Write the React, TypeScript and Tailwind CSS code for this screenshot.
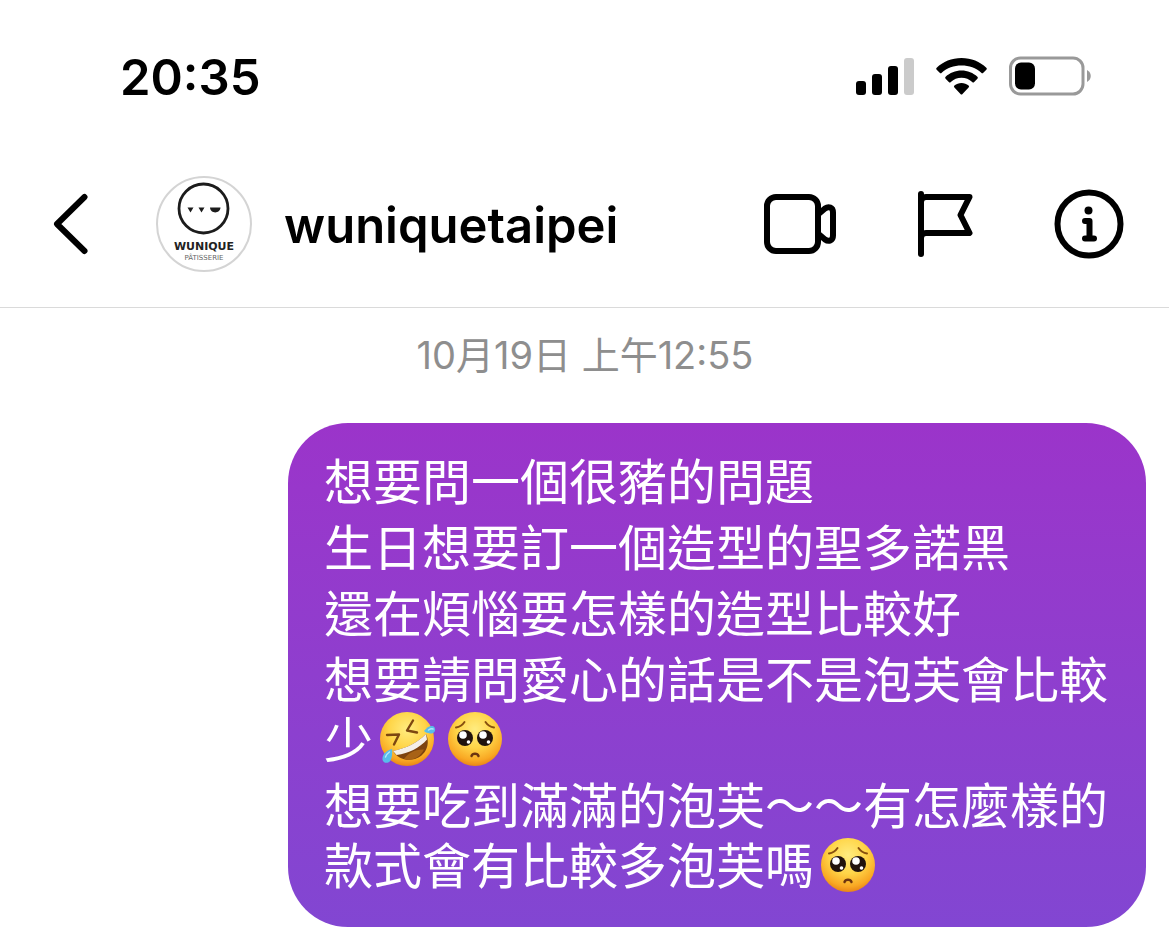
import { useId } from 'react';

const messages: string[] = [
    '想要問一個很豬的問題',
    '生日想要訂一個造型的聖多諾黑',
    '還在煩惱要怎樣的造型比較好',
    '想要請問愛心的話是不是泡芙會比較少🤣🥺',
    '想要吃到滿滿的泡芙～～有怎麼樣的款式會有比較多泡芙嗎🥺',
]

const SignalIcon = () => (
    <svg width="58" height="38" viewBox="0 0 58 38" aria-hidden="true">
        <rect x="0" y="24" width="10" height="14" rx="3" />
        <rect x="16" y="17" width="10" height="21" rx="3" />
        <rect x="32" y="9" width="10" height="29" rx="3" />
        <rect x="48" y="1" width="10" height="37" rx="3" fill="#cbcbcb" />
    </svg>
)

const WifiIcon = () => (
    <svg width="51" height="38" viewBox="0 0 51 38" aria-hidden="true">
        <path d="M25.500 1C35.300 1 44 4.700 50.300 10.700q1 1 0 2L47.300 15.800q-1 1-2 0C40 10.900 33.100 8.500 25.500 8.500S11 10.900 5.700 15.800q-1 1-2 0L.7 12.700q-1-1 0-2C7 4.700 15.700 1 25.500 1Z" />
        <path d="M25.500 13.500c6.100 0 11.700 2.400 15.900 6.200q1 1 0 2l-3.200 3.200q-1 1-2 0c-2.900-2.600-6.600-4.200-10.700-4.200s-7.800 1.600-10.700 4.200q-1 1-2 0l-3.200-3.200q-1-1 0-2c4.200-3.800 9.800-6.200 15.900-6.200Z" />
        <path d="M25.500 26c2.700 0 5.100 1 7.100 2.600q1 1 0 2l-6.100 6.300q-1 1-2 0l-6.100-6.300q-1-1 0-2c2-1.600 4.400-2.600 7.100-2.600Z" />
    </svg>
)

const BatteryIcon = () => (
    <svg width="82" height="40" viewBox="0 0 82 40" aria-hidden="true">
        <rect x="1.500" y="2" width="72.500" height="36" rx="10" fill="none" stroke="#999" strokeWidth="3" />
        <rect x="6" y="6.500" width="20" height="27" rx="6" />
        <path d="M78 14c5 2.500 5 9.500 0 12Z" fill="#999" />
    </svg>
)

const BackIcon = () => (
    <svg width="36" height="64" viewBox="0 0 36 64" fill="none" stroke="currentColor" strokeWidth="6" strokeLinecap="round" strokeLinejoin="round" aria-hidden="true">
        <path d="M32.500 5 5 32l27.500 27" />
    </svg>
)

const VideoIcon = () => (
    <svg width="72" height="60" viewBox="0 0 72 60" fill="none" stroke="currentColor" strokeWidth="6" strokeLinejoin="round" aria-hidden="true">
        <rect x="3" y="3" width="51" height="54" rx="9" />
        <path d="m54.500 20 6.500-5.500c3.500-2.500 8-1.500 8 4v23c0 5.500-4.500 6.500-8 4L54.500 40" />
    </svg>
)

const FlagIcon = () => (
    <svg width="56" height="66" viewBox="0 0 56 66" fill="none" stroke="currentColor" strokeWidth="6" strokeLinecap="round" strokeLinejoin="round" aria-hidden="true">
        <path d="M4 3v60M4 11q0-5 5-5h43.500L43.500 24l9 18H9q-5 0-5 5" />
    </svg>
)

const InfoIcon = () => (
    <svg width="70" height="70" viewBox="0 0 70 70" fill="none" stroke="currentColor" strokeWidth="6" strokeLinecap="round" strokeLinejoin="round" aria-hidden="true">
        <circle cx="35" cy="35" r="31.500" />
        <circle cx="34.500" cy="21.500" r="4" fill="currentColor" stroke="none" />
        <path d="M31 32h4.500v17M31 49.500h9" />
    </svg>
)

const Logo = () => (
    <svg width="96" height="96" viewBox="0 0 96 96" role="img" aria-label="WUNIQUE PÂTISSERIE">
        <circle cx="48" cy="48" r="47" fill="#fff" stroke="#d4d4d4" strokeWidth="2" />
        <circle cx="47.500" cy="32.500" r="24.500" fill="none" stroke="#1c1c1c" strokeWidth="2.800" />
        <path d="M31.500 31.500h6L34.500 36.500ZM42.500 31.500h6L45.500 36.500ZM54 31.500h10.500c-.5 6.500-10 6.500-10.500 0Z" fill="#1c1c1c" />
        <text x="48" y="74" textAnchor="middle" fill="#222" className="font-['DejaVu_Sans'] text-[11px] font-bold">WUNIQUE</text>
        <text x="48" y="84" textAnchor="middle" fill="#666" className="font-['DejaVu_Sans'] text-[7px]">PÂTISSERIE</text>
    </svg>
)

const FaceFill = ({ id }: { id: string }) => (
    <>
        <defs>
            <radialGradient id={id} cx="50%" cy="32%" r="68%">
                <stop offset="0" stopColor="#ffec80" />
                <stop offset=".5" stopColor="#ffd548" />
                <stop offset=".85" stopColor="#f9a823" />
                <stop offset="1" stopColor="#e98518" />
            </radialGradient>
        </defs>
        <circle cx="34" cy="30" r="27" fill={`url(#${id})`} />
    </>
)

const LaughingFace = () => {
    const id = useId()
    return (
        <svg width="68" height="60" viewBox="0 -2 68 60" className="inline-block align-top" role="img" aria-label="🤣">
            <FaceFill id={id} />
            <path d="M20 42C34 39 44 34 53 25c5 11-1 22-11 25-9 2.500-18-1-22-8Z" fill="#7d430f" />
            <path d="M31 50c4-6 11-10 20-9.500-4 8-12 12-20 9.500Z" fill="#a86216" />
            <path d="M20 42C34 39 44 34 53 25l1 5.500C47 38.500 36 44.500 23.500 46Z" fill="#f4efe8" />
            <path d="m14 26 12-.5-5 10M40 11.500 34 21.500l10 2" fill="none" stroke="#7d4711" strokeWidth="2.400" strokeLinecap="round" strokeLinejoin="round" />
            <path d="M19 40c-6.500 2-10 6-9.500 10.500.5 4 6 4.500 8 1 1.500-3 2-7 1.500-11.500Z" fill="#58bdeb" />
            <path d="M51 22c3.500-4.500 8.500-6.500 10.500-3.500 2 3.500-1 6.500-4.500 6-2.500-.5-4.500-1-6-2.500Z" fill="#58bdeb" />
            <path d="M12.500 48c1-2.500 2.500-4 4-5M55.500 21c1.500-1 3-1.500 4.500-1" fill="none" stroke="#b6e7fa" strokeWidth="1.500" strokeLinecap="round" />
        </svg>
    )
}

const PleadingFace = () => {
    const id = useId()
    return (
        <svg width="68" height="60" viewBox="0 -2 68 60" className="inline-block align-top" role="img" aria-label="🥺">
            <FaceFill id={id} />
            <path d="M15 18.500c4-.5 6.500-2.500 8.500-5.500M44.500 13c2 3 4.500 5 8.500 5.500" fill="none" stroke="#87500f" strokeWidth="2" strokeLinecap="round" />
            <circle cx="24" cy="29" r="8" fill="#21130d" />
            <circle cx="44" cy="29" r="8" fill="#21130d" />
            <circle cx="22" cy="26" r="3.800" fill="#fff" />
            <circle cx="42" cy="26" r="3.800" fill="#fff" />
            <circle cx="27.500" cy="33" r="1.800" fill="#fff" />
            <circle cx="47.500" cy="33" r="1.800" fill="#fff" />
            <path d="M30.500 47c1-3 6-3 7 0" fill="none" stroke="#6c3410" strokeWidth="2.400" strokeLinecap="round" />
        </svg>
    )
}

// swaps the emoji characters for the drawn faces
const MessageLine = ({ text }: { text: string }) => (
    <p>
        {text.split(/(🤣|🥺)/u).map((part, i) => {
            if (part === '🤣') return <LaughingFace key={i} />
            if (part === '🥺') return <PleadingFace key={i} />
            return part
        })}
    </p>
)

const App = () => {
    return (
        <div className="min-h-screen bg-white text-black font-['Inter','Noto_Sans_CJK_TC',sans-serif]">
            <div className="flex h-35 items-center justify-between pt-3 pr-[78px] pl-30">
                <time className="pt-0.5 text-[49px] leading-none font-semibold">20:35</time>
                <div className="flex items-center gap-[22px]">
                    <SignalIcon />
                    <WifiIcon />
                    <BatteryIcon />
                </div>
            </div>

            <header className="flex h-42 items-center justify-between border-b border-[#dadada] pr-[45px] pl-[52px]">
                <div className="flex items-center">
                    <button type="button" aria-label="Back" className="mr-[68px]">
                        <BackIcon />
                    </button>
                    <a href="#profile" className="flex items-center gap-8">
                        <Logo />
                        <h1 className="pt-1 text-[49px] leading-none font-semibold">wuniquetaipei</h1>
                    </a>
                </div>
                <div className="flex items-center gap-[81px]">
                    <button type="button" aria-label="Video call"><VideoIcon /></button>
                    <button type="button" aria-label="Flag"><FlagIcon /></button>
                    <button type="button" aria-label="Info"><InfoIcon /></button>
                </div>
            </header>

            <main className="pr-[23px] pb-4 pl-6">
                <p className="pt-[23px] pb-11 text-center text-[38px] leading-[48px] text-[#8e8e8e]">10月19日 上午12:55</p>
                <div className="ml-auto flex w-[858px] max-w-full flex-col gap-1.5 rounded-[60px] bg-linear-to-b from-[#9b34ca] to-[#8246d2] px-9 pt-[26px] pb-[34px] font-['Noto_Sans_CJK_TC',sans-serif] text-[49px] leading-[60px] text-white">
                    {messages.map((text) => <MessageLine key={text} text={text} />)}
                </div>
            </main>
        </div>
    );
};

export default App;
